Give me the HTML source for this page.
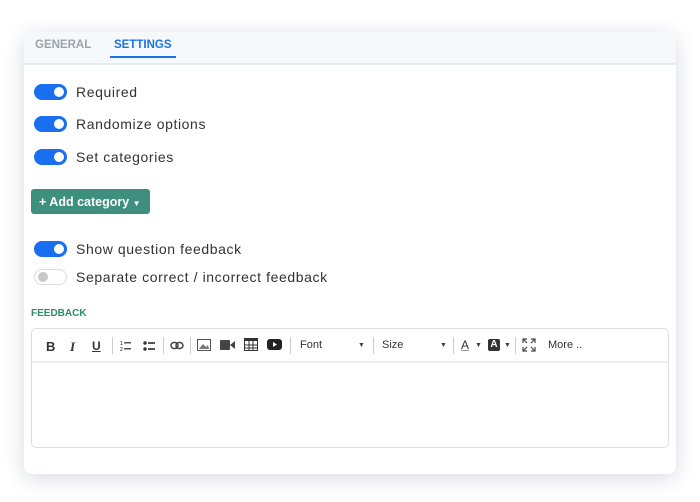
<!DOCTYPE html>
<html><head><meta charset="utf-8"><style>
*{box-sizing:border-box;margin:0;padding:0}
body{width:700px;height:502px;background:#fff;font-family:"Liberation Sans",sans-serif;position:relative;overflow:hidden}
.card{position:absolute;left:24px;top:32px;width:652px;height:442px;background:#fff;border-radius:8px;box-shadow:0 4px 20px rgba(60,70,110,.2)}
.tabs{height:33px;background:#f5f9fc;border-bottom:2px solid #e6ebef;border-radius:8px 8px 0 0;position:relative}
.tab{position:absolute;top:7px;font-size:11.5px;font-weight:bold;color:#9aa3ab}
.tab.act{color:#1a73e8}
.ul{position:absolute;left:86px;top:24px;width:66px;height:2px;background:#1a73e8}
.row{position:absolute;left:10px;height:18px;display:flex;align-items:center}
.tg{width:33px;height:16px;border-radius:8px;background:#1a6ef0;position:relative;margin-right:9px}
.tg::after{content:"";position:absolute;right:3px;top:3px;width:10px;height:10px;border-radius:50%;background:#fff}
.tg.off{background:#fff;border:1px solid #dcdcdc}
.tg.off::after{left:3px;top:2px;background:#c8c8c8}
.row span{font-size:14px;color:#333;letter-spacing:.6px}
.btn{position:absolute;left:7px;top:157px;width:119px;height:25px;background:#3e8f7d;border-radius:3px;color:#fff;font-size:12.5px;font-weight:bold;padding:6px 0 0 8px}
.lbl{position:absolute;left:7px;top:276px;font-size:10px;font-weight:bold;color:#2f8a6e}
.ed{position:absolute;left:7px;top:296px;width:638px;height:120px;border:1px solid #ddd;border-radius:5px}
.tb{height:34px;border-bottom:2px solid #eee;position:relative;font-size:11px;color:#333}
.tb>*{position:absolute}
.sep{top:8px;width:1px;height:17px;background:#ccc}
.car{font-size:7px;color:#444}
</style></head><body>
<div class="card">
<div class="tabs"><div class="tab" style="left:11px">GENERAL</div><div class="tab act" style="left:90px">SETTINGS</div><div class="ul"></div></div>
<div class="row" style="top:51px"><div class="tg"></div><span>Required</span></div>
<div class="row" style="top:83px"><div class="tg"></div><span>Randomize options</span></div>
<div class="row" style="top:116px"><div class="tg"></div><span>Set categories</span></div>
<div class="btn">+ Add category <span style="font-size:8px">&#9660;</span></div>
<div class="row" style="top:208px"><div class="tg"></div><span>Show question feedback</span></div>
<div class="row" style="top:236px"><div class="tg off"></div><span>Separate correct / incorrect feedback</span></div>
<div class="lbl">FEEDBACK</div>
<div class="ed"><div class="tb">
<b style="left:14px;top:10px;font-size:13px">B</b>
<i style="left:38px;top:10px;font-size:13px;font-family:'Liberation Serif',serif;font-weight:bold">I</i>
<u style="left:60px;top:10px;font-size:12px;font-weight:bold">U</u>
<div class="sep" style="left:80px"></div>
<svg style="left:88px;top:11px" width="12" height="12"><text x="0" y="5" font-size="5">1</text><text x="0" y="11" font-size="5">2</text><rect x="4" y="2" width="7" height="1.5" fill="#555"/><rect x="4" y="8" width="7" height="1.5" fill="#555"/></svg>
<svg style="left:111px;top:11px" width="13" height="12"><circle cx="2" cy="3" r="1.7" fill="#333"/><circle cx="2" cy="9" r="1.7" fill="#333"/><rect x="5" y="2" width="7" height="2" fill="#555"/><rect x="5" y="8" width="7" height="2" fill="#555"/></svg>
<div class="sep" style="left:131px"></div>
<svg style="left:138px;top:12px" width="14" height="9"><rect x="1" y="1.5" width="7" height="6" rx="3" fill="none" stroke="#444" stroke-width="1.5"/><rect x="6" y="1.5" width="7" height="6" rx="3" fill="none" stroke="#444" stroke-width="1.5"/></svg>
<div class="sep" style="left:158px"></div>
<svg style="left:165px;top:10px" width="14" height="12"><rect x=".5" y=".5" width="13" height="11" fill="none" stroke="#555"/><path d="M2 10 L6 5 L9 8 L11 6 L12 10Z" fill="#777"/></svg>
<svg style="left:188px;top:10px" width="15" height="12"><rect x="0" y="1" width="10" height="10" rx="1" fill="#444"/><path d="M10 6 L15 2 V10Z" fill="#444"/></svg>
<svg style="left:212px;top:9px" width="14" height="13"><rect x=".5" y=".5" width="13" height="12" fill="none" stroke="#333"/><rect x="0" y="0" width="14" height="3" fill="#333"/><path d="M0 7H14M0 10H14M5 3V13M9 3V13" stroke="#333"/></svg>
<svg style="left:235px;top:10px" width="15" height="11"><rect width="15" height="11" rx="3" fill="#222"/><path d="M6 3 L10 5.5 L6 8Z" fill="#fff"/></svg>
<div class="sep" style="left:258px"></div>
<span style="left:268px;top:10px">Font</span><span class="car" style="left:326px;top:13px">&#9660;</span>
<div class="sep" style="left:341px"></div>
<span style="left:350px;top:10px">Size</span><span class="car" style="left:408px;top:13px">&#9660;</span>
<div class="sep" style="left:421px"></div>
<span style="left:429px;top:9px;font-size:12px;text-decoration:underline;text-decoration-color:#999">A</span><span class="car" style="left:443px;top:13px">&#9660;</span>
<span style="left:456px;top:10px;width:12px;height:12px;background:#333;color:#fff;font-size:10px;font-weight:bold;text-align:center;border-radius:2px">A</span><span class="car" style="left:472px;top:13px">&#9660;</span>
<div class="sep" style="left:483px"></div>
<svg style="left:490px;top:9px" width="14" height="14"><path d="M1 5V1H5M1 1L5 5M9 1H13V5M13 1L9 5M1 9V13H5M1 13L5 9M13 9V13H9M13 13L9 9" stroke="#444" fill="none" stroke-width="1.2"/></svg>
<span style="left:516px;top:10px">More ..</span>
</div></div>
</div>
</body></html>
